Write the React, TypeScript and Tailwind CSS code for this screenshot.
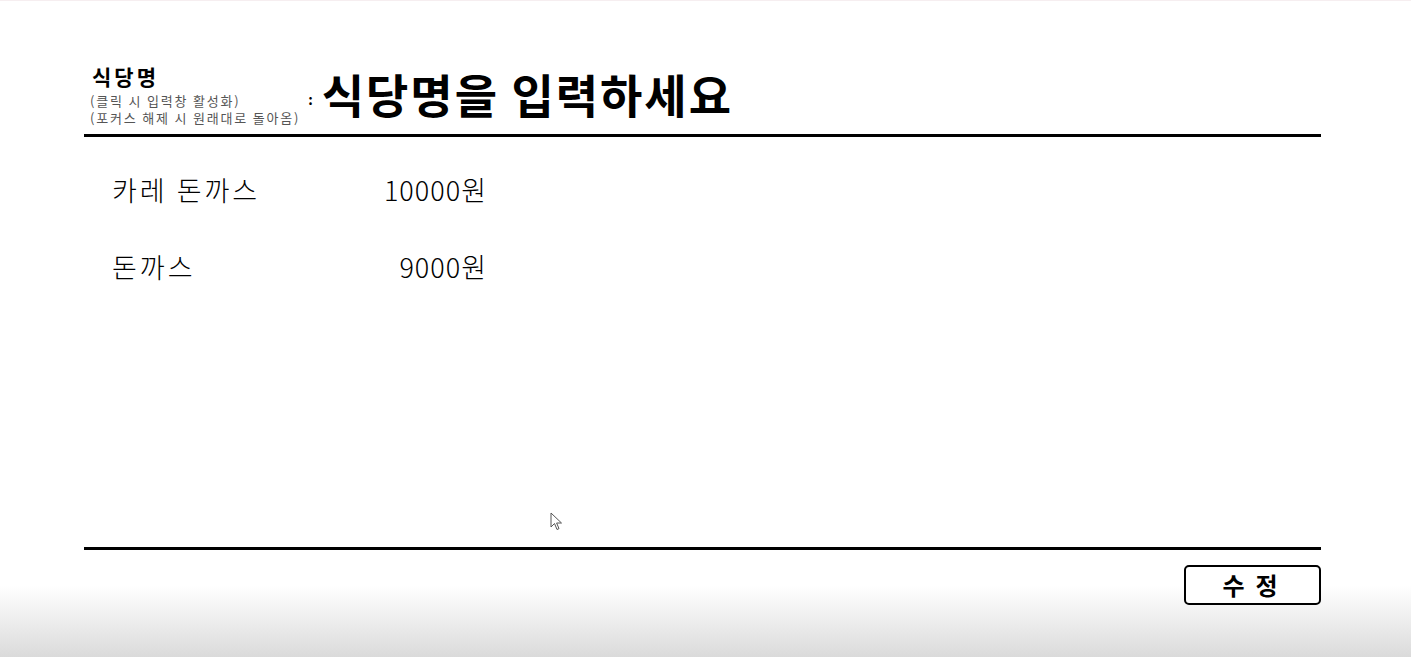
import React from "react";

const font = { fontFamily: '"Noto Sans CJK KR", "Noto Sans", sans-serif' };

function Cursor() {
  return (
    <svg className="absolute left-[550px] top-[511px]" width="14" height="20" viewBox="0 0 14 20">
      <path d="M1 1 L1 15 L4.5 11.5 L7 17.5 L9 16.6 L6.6 11 L11.5 11 Z" fill="#fff" stroke="#555" strokeWidth="1" strokeLinejoin="round" />
    </svg>
  );
}

export default function App() {
  const items = [
    { name: "카레 돈까스", price: "10000원" },
    { name: "돈까스", price: "9000원" },
  ];
  return (
    <div
      className="relative h-[657px] w-full overflow-hidden border-t border-[#f6eef0] bg-[linear-gradient(to_bottom,#ffffff_0px,#ffffff_585px,#dadada_657px)] pl-[84px] pr-[90px] text-black"
      style={font}
    >
      <div className="flex flex-col">
        <div className="flex items-end pt-[63px]">
          <div className="flex flex-col pl-[6px]">
            <div className="pl-[2px] text-[21px] font-bold leading-[24px] tracking-[3px]">식당명</div>
            <div className="mt-[4px] text-[13px] leading-[17px] tracking-[1.8px] text-[#555]">(클릭 시 입력창 활성화)</div>
            <div className="text-[13px] leading-[17px] tracking-[1.8px] text-[#555]">(포커스 해제 시 원래대로 돌아옴)</div>
          </div>
          <div className="mb-[20px] ml-[8px] text-[14px] font-bold leading-none">:</div>
          <div className="mb-[6px] ml-[9px] text-[46px] font-bold leading-[54px] tracking-[2px]">식당명을 입력하세요</div>
        </div>
        <div className="mt-[8px] h-[3px] bg-black" />
        <div className="flex h-[410px] flex-col pt-[34px]">
          {items.map((it) => (
            <div key={it.name} className="flex h-[77px] items-start pl-[28px] text-[27px] font-light leading-[38px] text-black">
              <div className="w-[230px] tracking-[3px]">{it.name}</div>
              <div className="w-[145px] text-right tracking-[1px]">{it.price}</div>
            </div>
          ))}
        </div>
        <div className="h-[3px] bg-black" />
        <div className="flex justify-end pt-[15px]">
          <button className="flex h-[40px] w-[137px] items-center justify-center rounded-[5px] border-2 border-black bg-white text-[24px] font-bold tracking-[11px]">
            <span className="pl-[6px]">수정</span>
          </button>
        </div>
      </div>
      <Cursor />
    </div>
  );
}
